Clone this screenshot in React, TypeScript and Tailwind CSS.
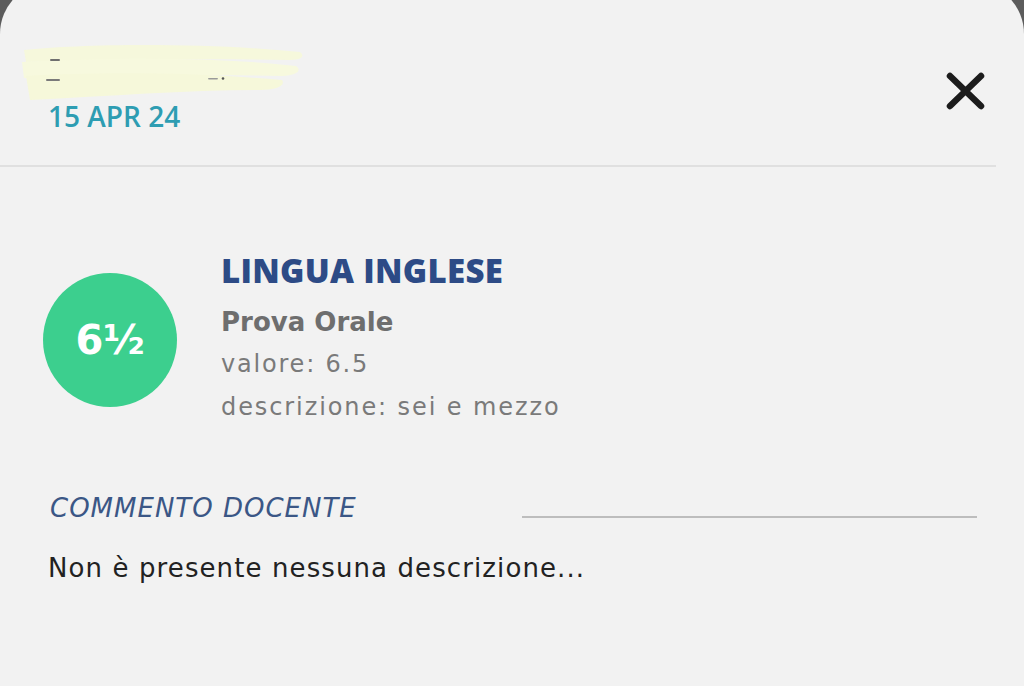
import React from "react";

const dejavu = { fontFamily: '"DejaVu Sans", "Noto Sans", sans-serif' };
const opensans = { fontFamily: '"Open Sans", "Noto Sans", sans-serif' };

function Scribble() {
  return (
    <svg width="290" height="62" viewBox="0 0 290 62" className="block">
      <path d="M4 8 C60 2 180 0 280 10 C285 14 282 18 270 18 C180 16 80 18 6 20 Z" fill="#f6f8dc" />
      <path d="M2 20 C80 16 190 14 276 24 C282 28 278 33 262 34 C180 32 90 34 4 36 Z" fill="#f7f9de" />
      <path d="M6 34 C80 30 170 30 262 38 C266 44 256 48 240 48 C170 48 90 54 10 58 Z" fill="#f6f8da" />
      <rect x="30" y="17" width="10" height="2" fill="#6f6f6f" rx="1" />
      <rect x="26" y="37" width="14" height="2" fill="#7a7a7a" rx="1" />
      <rect x="188" y="36" width="10" height="1.5" fill="#9a9a9a" rx="1" />
      <circle cx="203" cy="36.5" r="1.3" fill="#555" />
    </svg>
  );
}

export default function App() {
  return (
    <div className="w-[1024px] h-[686px] bg-[#5c5c5c] overflow-hidden" style={dejavu}>
      <div className="-mt-[18px] h-[704px] bg-[#f2f2f2] rounded-t-[52px] flex flex-col">
        <div className="w-[996px] h-[185px] border-b-2 border-[#e0e0e0] flex justify-between">
          <div className="flex flex-col pt-[60px]">
            <div className="ml-[20px]">
              <Scribble />
            </div>
            <div
              className="pl-[48px] mt-[-4px] text-[28px] leading-[32px] font-semibold text-[#2e9db2]"
              style={opensans}
            >
              15 APR 24
            </div>
          </div>
          <div className="pt-[90px] pr-[11px]">
            <svg width="39" height="38" viewBox="0 0 39 38">
              <path d="M4 4 L35 34 M35 4 L4 34" stroke="#1c1c1c" strokeWidth="6.5" strokeLinecap="round" />
            </svg>
          </div>
        </div>

        <div className="flex items-start pl-[43px] pt-[84px]">
          <div className="mt-[22px] w-[134px] h-[134px] rounded-full bg-[#3ccf8e] flex items-center justify-center text-white text-[40px] font-bold leading-none">
            6½
          </div>
          <div className="ml-[44px] flex flex-col">
            <div
              className="text-[33px] leading-[40px] font-extrabold text-[#2d4b86] tracking-[0.3px]"
              style={opensans}
            >
              LINGUA INGLESE
            </div>
            <div className="mt-[11px] text-[26px] leading-[40px] font-bold text-[#6e6e6e]">Prova Orale</div>
            <div className="mt-[1px] text-[24px] leading-[43px] text-[#7a7a7a] tracking-[1.8px]">valore: 6.5</div>
            <div className="text-[24px] leading-[43px] text-[#7a7a7a] tracking-[1.9px]">descrizione: sei e mezzo</div>
          </div>
        </div>

        <div className="flex items-end justify-between pl-[50px] pr-[47px] mt-[64px]">
          <div className="text-[26px] leading-[30px] italic text-[#3b5786] tracking-[1px]">COMMENTO DOCENTE</div>
          <div className="w-[455px] mb-[5px] h-[2px] bg-[#bdbdbd]" />
        </div>
        <div className="pl-[48px] mt-[28px] text-[26px] leading-[34px] text-[#222222] tracking-[1.1px]">
          Non è presente nessuna descrizione...
        </div>
      </div>
    </div>
  );
}
